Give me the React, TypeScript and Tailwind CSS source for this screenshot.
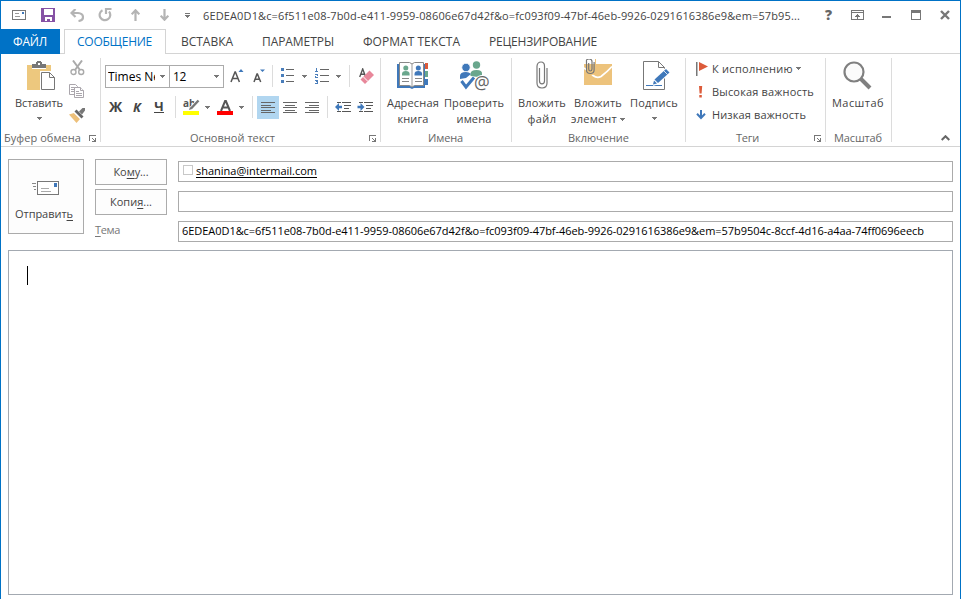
import { useLayoutEffect, useRef } from "react";
import type { ReactNode } from "react";

/** Single line of text whose tracking is adjusted so that it spans `w` pixels. */
function Fit({ w, className = "", children }: { w: number; className?: string; children: ReactNode }) {
  const ref = useRef<HTMLSpanElement>(null);
  useLayoutEffect(() => {
    const el = ref.current;
    if (!el) return;
    el.style.letterSpacing = "0px";
    const n = (el.textContent ?? "").length;
    const natural = el.getBoundingClientRect().width;
    el.style.letterSpacing = `${(w - natural) / n}px`;
  }, [w]);
  return (
    <span ref={ref} className={`inline-block whitespace-nowrap leading-4 ${className}`}>
      {children}
    </span>
  );
}

function Arrow({ className = "" }: { className?: string }) {
  return (
    <svg width="5" height="3" viewBox="0 0 5 3" shapeRendering="crispEdges" className={`shrink-0 ${className}`}>
      <path d="M0 0h5v1H0zM1 1h3v1H1zM2 2h1v1H2z" fill="#777" />
    </svg>
  );
}

function Launcher() {
  return (
    <svg width="8" height="8" viewBox="0 0 8 8" shapeRendering="crispEdges" className="shrink-0">
      <path d="M0 0h7v1H1v5H0zM3 3h1v1H3zM4 4h1v1H4zM6 3h1v4H3V6h2V5h1z" fill="#777" />
    </svg>
  );
}

function Divider({ className = "" }: { className?: string }) {
  return <div className={`h-[22px] w-px shrink-0 bg-[#dcdcdc] ${className}`} />;
}

function Group({ width, footer, children }: { width: string; footer: ReactNode; children: ReactNode }) {
  return (
    <div className={`relative flex shrink-0 flex-col ${width}`}>
      <div className="flex h-[76px]">{children}</div>
      <div className="flex h-4 text-[#666]">{footer}</div>
      <div className="absolute right-0 top-1 h-[84px] w-px bg-[#dcdcdc]" />
    </div>
  );
}

function BigButton({ width, icon, children }: { width: string; icon: ReactNode; children: ReactNode }) {
  return (
    <div className={`flex shrink-0 flex-col items-center ${width}`}>
      <div className="flex h-[41px] shrink-0 items-start pt-[7px]">{icon}</div>
      {children}
    </div>
  );
}

const PasteIcon = () => (
  <svg width="30" height="31" viewBox="0 0 30 31">
    <path d="M0 4h5v4h14V4h5v25H0z" fill="#edc87e" />
    <path d="M5 3h4V1h1V0h4v1h1v2h4v4H5z" fill="#777" />
    <rect x="11" y="2" width="2" height="2" fill="#fff" />
    <path d="M13 10h11l6 6v15H13z" fill="#fff" />
    <path d="M14.500 11.500h8l5 5v12h-13z" fill="#fff" stroke="#777" />
    <path d="M22.500 11.500v5h5" fill="none" stroke="#777" />
  </svg>
);

const CutIcon = () => (
  <svg width="15" height="16" viewBox="0 0 15 16" fill="none" stroke="#aaa">
    <path d="M3 0.500L10 10M12 0.500L5 10" strokeWidth="2" />
    <circle cx="3.500" cy="12" r="2.500" strokeWidth="1.400" />
    <circle cx="11.200" cy="12" r="2.500" strokeWidth="1.400" />
  </svg>
);

const CopyIcon = () => (
  <svg width="16" height="15" viewBox="0 0 16 15" fill="#fff" stroke="#aaa6ac">
    <path d="M.5.5h6l2 2v8h-8z" />
    <path d="M2 3.500h4M2 5.500h3M2 7.500h3" />
    <path d="M5.500 3.500h6l3 3v7h-9z" />
    <path d="M11.500 3.500v3h3M7 7.500h3M7 9.500h6M7 11.500h6" />
  </svg>
);

const BrushIcon = () => (
  <svg width="17" height="15" viewBox="0 0 17 15">
    <path d="M0 6.500l5-1.500 6 6-3.500 4z" fill="#edc07a" />
    <path d="M5.500 3.500l2-2 7 7-2 2z" fill="#666" />
    <path d="M10 3.500L13.500 0 16 0v2.500L13 6.500z" fill="#777" />
    <path d="M5 4.500l7 7" stroke="#fff" strokeWidth=".8" />
  </svg>
);

const BulletsIcon = () => (
  <svg width="14" height="15" viewBox="0 0 14 15" shapeRendering="crispEdges">
    <path d="M0 0h3v3H0zM0 6h3v3H0zM0 12h3v3H0z" fill="#4a7ebb" />
    <path d="M5 1h8v1H5zM5 7h8v1H5zM5 13h8v1H5z" fill="#666" />
  </svg>
);

const NumbersIcon = () => (
  <svg width="15" height="16" viewBox="0 0 15 16" shapeRendering="crispEdges">
    <path
      d="M1 0h1v3h1v1H0V3h1V1H0zM0 6h3v2H1v1h2v1H0V8h2V7H0zM0 12h3v4H0v-1h2v-1H1v-1h1H0z"
      fill="#4a7ebb"
    />
    <path d="M5 1h9v1H5zM5 7h9v1H5zM5 13h9v1H5z" fill="#666" />
  </svg>
);

const EraserIcon = () => (
  <svg width="15" height="16" viewBox="0 0 15 16">
    <path d="M.7 9L3.700 1l3 8M2 6.300h4" fill="none" stroke="#555" strokeWidth="1.400" />
    <path d="M1.500 11.500L10.500 2.500 15 7 6 16z" fill="#e8879a" />
    <path d="M4 8.500l5 5" stroke="#fff" strokeWidth="1" />
  </svg>
);

const HighlightIcon = () => (
  <svg width="17" height="17" viewBox="0 0 17 17" className="overflow-visible">
    <text x="0" y="8" fontSize="10" fontWeight="700" fill="#555" className="font-['Open_Sans',sans-serif]">
      ab
    </text>
    <path d="M15.500 1.500L7 10.500" stroke="#fff" strokeWidth="4" />
    <path d="M15.500 1.500L8 9.500" stroke="#777" strokeWidth="2.400" />
    <path d="M6 11l1-3 2 2z" fill="#777" />
    <rect x="0" y="12" width="16" height="4" fill="#ff0" />
  </svg>
);

const FontColorIcon = () => (
  <svg width="17" height="17" viewBox="0 0 17 17">
    <path d="M4 12L8.100 2h.8L13 12M5.500 8.500h6" fill="none" stroke="#555" strokeWidth="2" />
    <rect x="0" y="12" width="16" height="4" fill="#f00" />
  </svg>
);

function AlignIcon({ kind }: { kind: "left" | "center" | "right" }) {
  const off = { left: 0, center: 2, right: 4 }[kind];
  return (
    <svg width="14" height="11" viewBox="0 0 14 11" shapeRendering="crispEdges" fill="#666">
      {[0, 2.5, 5, 7.5, 10].map((y, i) => (
        <rect key={y} x={i % 2 ? off : 0} y={Math.round(y)} width={i % 2 ? 10 : 14} height="1" />
      ))}
    </svg>
  );
}

function DentIcon({ dir }: { dir: "in" | "out" }) {
  return (
    <svg width="16" height="11" viewBox="0 0 16 11">
      <path d="M2 0h4v1H2zM7 0h9v1H7zM9 3h7v1H9zM9 6h5v1H9zM2 9h4v1H2zM7 9h9v1H7z" fill="#555" />
      {dir === "out" ? (
        <path d="M0 5l4-4v2.800h3v2.400H4V9z" fill="#3f78ba" />
      ) : (
        <path d="M7.500 5l-4-4v2.800h-3v2.400h3V9z" fill="#3f78ba" />
      )}
    </svg>
  );
}

const BookIcon = () => (
  <svg width="32" height="29" viewBox="0 0 32 29">
    <path d="M28 2h3v6h-3z" fill="#dc5b3a" />
    <path d="M28 10h3v6h-3z" fill="#6aa78d" />
    <path d="M28 18h3v6h-3z" fill="#3f78ba" />
    <path d="M0 3h28v24H17l-2 1-2-1H0z" fill="#3f78ba" />
    <path d="M2.500 1.500h10l2.500 1.500 2.500-1.500h9v23h-9L15 26l-2.500-1.500h-10z" fill="#fff" stroke="#888" />
    <path d="M15 3v23" stroke="#999" />
    <circle cx="8.800" cy="7" r="2.500" fill="#6aa78d" />
    <path d="M5 14.500v-1.500q0-3 3.800-3t3.800 3v1.500z" fill="#6aa78d" />
    <circle cx="21.300" cy="7" r="2.500" fill="#3f78ba" />
    <path d="M17.500 14.500v-1.500q0-3 3.800-3t3.800 3v1.500z" fill="#3f78ba" />
    <path d="M5 17.500h7M5 20.500h7M18 17.500h7M18 20.500h7" stroke="#888" />
  </svg>
);

const CheckNamesIcon = () => (
  <svg width="31" height="31" viewBox="0 0 31 31">
    <circle cx="16.500" cy="4" r="3.700" fill="#6aa78d" />
    <path d="M10.500 15v-2q0-4 6-4t5.500 4v2l-4 1z" fill="#6aa78d" />
    <circle cx="6" cy="6.500" r="4.200" fill="#3f78ba" stroke="#fff" strokeWidth=".8" />
    <path d="M0 18v-3q0-4 6-4 3 0 5 2l-5 4z" fill="#3f78ba" />
    <path d="M1.500 20l4.500 6L14 16.500" fill="none" stroke="#fff" strokeWidth="5" />
    <path d="M1.500 20l4.500 6L14 16.500" fill="none" stroke="#3f78ba" strokeWidth="3" />
    <text x="14" y="27.500" fontSize="17.500" fill="#666" stroke="#fff" strokeWidth="2" paintOrder="stroke" className="font-['Open_Sans',sans-serif]">
      @
    </text>
  </svg>
);

const ClipIcon = () => (
  <svg width="12" height="29" viewBox="0 0 12 29" fill="none" stroke="#777" strokeWidth="1.200">
    <path d="M3.500 7v13q0 2.800 2.500 2.800T8.500 20V5q0-4-3.500-4T1 5v17q0 5 5 5t5-5V7" />
  </svg>
);

const AttachItemIcon = () => (
  <svg width="29" height="29" viewBox="0 0 29 29">
    <rect x="0" y="5" width="28" height="21" fill="#edc37c" />
    <path d="M0 9q6 4 9 7.500 4 3 8 1Q23 13 28 7.500" fill="none" stroke="#fff" strokeWidth="1.800" />
    <path d="M2 0h10v12q-1 4-5 4t-5-4z" fill="#edc37c" />
    <path d="M2 0h9v5H2z" fill="#fff" />
    <path d="M4.700 4v6q0 2 1.600 2T8 10V2.500Q8 0 5 0T2.500 2.500V11q0 3.500 3.800 3.500t3.800-3.500V3" fill="none" stroke="#777" strokeWidth="1.200" />
  </svg>
);

const SignatureIcon = () => (
  <svg width="28" height="30" viewBox="0 0 28 30">
    <path d="M1.500.5h15l6 6v22h-21z" fill="#fff" stroke="#777" />
    <path d="M16.500.5v6h6" fill="none" stroke="#777" />
    <path d="M4 24.500h16" stroke="#3f78ba" />
    <path d="M24 6l5 5-12 12-6 2 2-7z" fill="#fff" />
    <path d="M24 8l3.500 3.500L16 22l-3.500-3.500z" fill="#3f78ba" />
    <path d="M12 19.500l3 3-4 1z" fill="#3f78ba" />
    <path d="M21.500 9.500l4 4" stroke="#fff" strokeWidth=".8" />
  </svg>
);

const ZoomIcon = () => (
  <svg width="30" height="30" viewBox="0 0 30 30" fill="none" stroke="#808080">
    <circle cx="11" cy="11" r="9.500" strokeWidth="2.200" fill="#fbfbfb" />
    <path d="M17.500 17.500L27 27" strokeWidth="4" />
  </svg>
);

function TitleBar() {
  return (
    <div className="flex h-7 items-start text-[#444]">
      <svg width="14" height="11" viewBox="0 0 14 11" className="ml-[11px] mt-[9px]" shapeRendering="crispEdges">
        <path d="M.5.5h13v9H.5z" fill="#fff" stroke="#777" />
        <path d="M3 3h4v1H3zM3 6h5v1H3z" fill="#999" />
        <path d="M10 2h2v2h-2z" fill="#3f78ba" />
      </svg>
      <svg width="14" height="14" viewBox="0 0 14 14" className="ml-[15px] mt-[7px]">
        <path d="M0 0h14v14H0z" fill="#8652a5" />
        <path d="M3 1h9v6H3zM4 9h7v4H9v-2H6v2H4z" fill="#fff" />
      </svg>
      <svg width="14" height="13" viewBox="0 0 14 13" className="ml-[15px] mt-[8px]" fill="none" stroke="#b4b4b4" strokeWidth="2.200">
        <path d="M5.500 0L1.500 4l4 4M2 4h6q5 .5 5 4t-4.500 4" />
      </svg>
      <svg width="14" height="14" viewBox="0 0 14 14" className="ml-[14px] mt-[7px]" fill="none" stroke="#b4b4b4" strokeWidth="2.200">
        <path d="M4.500 2.200A5.300 5.300 0 1 0 11 3.500M8 6V1h5.500" />
      </svg>
      <svg width="9" height="12" viewBox="0 0 9 12" className="ml-[19px] mt-2" fill="none" stroke="#b4b4b4" strokeWidth="2.200">
        <path d="M4.500 12V1.500M.7 5.300l3.800-4 3.800 4" />
      </svg>
      <svg width="9" height="12" viewBox="0 0 9 12" className="ml-5 mt-2" fill="none" stroke="#b4b4b4" strokeWidth="2.200">
        <path d="M4.500 0v10.500M.7 6.700l3.800 4 3.800-4" />
      </svg>
      <svg width="6" height="6" viewBox="0 0 6 6" className="ml-[16px] mt-3" shapeRendering="crispEdges">
        <path d="M0 0h5v1H0zM0 2h5v1H0zM1 3h3v1H1zM2 4h1v1H2z" fill="#777" />
      </svg>
      <div className="ml-[12px] mt-[7px] w-[618px] text-[11px]">
        <Fit w={597}>6EDEA0D1&amp;c=6f511e08-7b0d-e411-9959-08606e67d42f&amp;o=fc093f09-47bf-46eb-9926-0291616386e9&amp;em=57b95...</Fit>
      </div>
      <span className="ml-[4px] mt-[5px] w-[9px] text-[14px] font-extrabold leading-[18px] text-[#666]">?</span>
      <svg width="13" height="11" viewBox="0 0 13 11" className="ml-[17px] mt-[9px]" shapeRendering="crispEdges">
        <path d="M.5.5h12v9H.5z" fill="none" stroke="#777" />
        <path d="M1 2h11v1H1zM6 4h1v5H6zM5 5h3v1H5zM4 6h5v1H4z" fill="#777" />
      </svg>
      <div className="ml-[18px] mt-[15px] h-0.5 w-[9px] bg-[#777]" />
      <div className="ml-5 mt-[9px] h-[10px] w-[10px] border border-t-[3px] border-[#777]" />
      <svg width="10" height="10" viewBox="0 0 10 10" className="ml-[19px] mt-[9px]">
        <path d="M1 1l8 8M9 1L1 9" stroke="#777" strokeWidth="2.400" />
      </svg>
    </div>
  );
}

function Tabs() {
  const rest: [string, number, string][] = [
    ["ВСТАВКА", 52, "w-[81px]"],
    ["ПАРАМЕТРЫ", 72, "w-[101px]"],
    ["ФОРМАТ ТЕКСТА", 97, "w-[126px]"],
    ["РЕЦЕНЗИРОВАНИЕ", 108, "w-[140px]"],
  ];
  return (
    <div className="flex h-[25px] text-xs text-[#444]">
      <div className="h-full w-[59px] bg-[#0072c6] pl-3 pt-[5px] text-white">
        <Fit w={34}>ФАЙЛ</Fit>
      </div>
      <div className="w-1 border-b border-[#d4d4d4]" />
      <div className="w-[102px] border border-b-0 border-[#d4d4d4] pl-3 pt-1 text-[#0072c6]">
        <Fit w={75}>СООБЩЕНИЕ</Fit>
      </div>
      <div className="flex flex-1 border-b border-[#d4d4d4] pl-[15px] pt-[5px]">
        {rest.map(([label, w, cell]) => (
          <div key={label} className={cell}>
            <Fit w={w}>{label}</Fit>
          </div>
        ))}
      </div>
    </div>
  );
}

function FontGroup() {
  return (
    <Group
      width="w-[280px]"
      footer={
        <>
          <div className="ml-[89px] w-[179px]">
            <Fit w={85}>Основной текст</Fit>
          </div>
          <div className="mt-[5px]">
            <Launcher />
          </div>
        </>
      }
    >
      <div className="flex w-full flex-col pl-1 pt-[11px]">
        <div className="flex h-[23px] shrink-0">
          <div className="flex w-[65px] items-center justify-between border border-[#ababab] pl-0.5 pr-1 text-xs text-black">
            <div className="w-[47px] overflow-hidden">
              <Fit w={52}>Times Ne</Fit>
            </div>
            <Arrow />
          </div>
          <div className="-ml-px flex w-[55px] items-center justify-between border border-[#ababab] pl-[3px] pr-1 text-xs text-black">
            <Fit w={13}>12</Fit>
            <Arrow />
          </div>
          <svg width="14" height="16" viewBox="0 0 14 16" className="ml-1.5 mt-[3px]">
            <path d="M1 14L5 4h.4l4 10M2.500 10.500h6" fill="none" stroke="#555" strokeWidth="1.500" />
            <path d="M8.500 4L11 1l2.500 3z" fill="#3f78ba" />
          </svg>
          <svg width="14" height="16" viewBox="0 0 14 16" className="ml-[9px] mt-[3px]">
            <path d="M1 14l3-8h.4l3.300 8M2.200 11.200h4.500" fill="none" stroke="#555" strokeWidth="1.500" />
            <path d="M7 1.500h5L9.500 4z" fill="#3f78ba" />
          </svg>
          <Divider className="ml-[5px]" />
          <div className="ml-2 mt-[3px] w-[14px]">
            <BulletsIcon />
          </div>
          <Arrow className="ml-[7px] mt-[10px]" />
          <div className="ml-2 mt-[3px] w-[15px]">
            <NumbersIcon />
          </div>
          <Arrow className="ml-1.5 mt-[10px]" />
          <Divider className="ml-2" />
          <div className="ml-[9px] mt-[3px]">
            <EraserIcon />
          </div>
        </div>
        <div className="mt-2 flex h-[23px] shrink-0 text-[13px] font-bold text-[#444]">
          <div className="ml-1 mt-0.5 w-[24px]">
            <Fit w={14} className="text-[14px]">Ж</Fit>
          </div>
          <div className="mt-0.5 w-[21px] italic">
            <Fit w={9}>К</Fit>
          </div>
          <div className="mt-0.5 h-[15px] w-[10px] border-b border-[#444] text-center leading-4">Ч</div>
          <Divider className="ml-[11px]" />
          <div className="ml-[7px] mt-[3px]">
            <HighlightIcon />
          </div>
          <Arrow className="ml-[5px] mt-[10px]" />
          <div className="ml-[7px] mt-[3px]">
            <FontColorIcon />
          </div>
          <Arrow className="ml-[5px] mt-[10px]" />
          <Divider className="ml-2" />
          <div className="ml-1 flex h-[23px] w-[22px] justify-center bg-[#b1d6f0] pt-[6px]">
            <AlignIcon kind="left" />
          </div>
          <div className="flex w-[22px] justify-center pt-[6px]">
            <AlignIcon kind="center" />
          </div>
          <div className="flex w-[22px] justify-center pt-[6px]">
            <AlignIcon kind="right" />
          </div>
          <Divider className="ml-1" />
          <div className="ml-[7px] mt-[6px]">
            <DentIcon dir="out" />
          </div>
          <div className="ml-1.5 mt-[6px]">
            <DentIcon dir="in" />
          </div>
        </div>
      </div>
    </Group>
  );
}

function Ribbon() {
  return (
    <div className="flex h-[93px] border-b border-[#d4d4d4] text-[11px] text-[#444]">
      <Group
        width="w-[100px]"
        footer={
          <>
            <div className="ml-[3px] w-[85px]">
              <Fit w={77}>Буфер обмена</Fit>
            </div>
            <div className="mt-[5px]">
              <Launcher />
            </div>
          </>
        }
      >
        <div className="w-[10px]" />
        <BigButton
          width="w-[56px]"
          icon={
            <div className="ml-1.5">
              <PasteIcon />
            </div>
          }
        >
          <Fit w={48}>Вставить</Fit>
          <Arrow className="mt-[6px]" />
        </BigButton>
        <div className="flex flex-col gap-[9px] pl-0.5 pt-1.5">
          <div className="flex h-[15px] pl-px">
            <CutIcon />
          </div>
          <CopyIcon />
          <BrushIcon />
        </div>
      </Group>

      <FontGroup />

      <Group
        width="w-[131px]"
        footer={
          <div className="ml-[47px]">
            <Fit w={35}>Имена</Fit>
          </div>
        }
      >
        <div className="w-[3px]" />
        <BigButton width="w-[58px]" icon={<BookIcon />}>
          <Fit w={52}>Адресная</Fit>
          <Fit w={31}>книга</Fit>
        </BigButton>
        <BigButton
          width="w-[64px]"
          icon={
            <div className="ml-[3px]">
              <CheckNamesIcon />
            </div>
          }
        >
          <Fit w={60}>Проверить</Fit>
          <Fit w={35}>имена</Fit>
        </BigButton>
      </Group>

      <Group
        width="w-[174px]"
        footer={
          <div className="ml-[56px]">
            <Fit w={61}>Включение</Fit>
          </div>
        }
      >
        <div className="w-0.5" />
        <BigButton width="w-[56px]" icon={<ClipIcon />}>
          <Fit w={48}>Вложить</Fit>
          <Fit w={29}>файл</Fit>
        </BigButton>
        <BigButton
          width="w-[56px]"
          icon={
            <div className="-mt-0.5">
              <AttachItemIcon />
            </div>
          }
        >
          <Fit w={48}>Вложить</Fit>
          <div className="flex items-center gap-[3px]">
            <Fit w={46}>элемент</Fit>
            <Arrow />
          </div>
        </BigButton>
        <BigButton
          width="w-[56px]"
          icon={
            <div className="ml-1">
              <SignatureIcon />
            </div>
          }
        >
          <Fit w={48}>Подпись</Fit>
          <Arrow className="mt-[6px]" />
        </BigButton>
      </Group>

      <Group
        width="w-[140px]"
        footer={
          <>
            <div className="ml-[50px] w-[78px]">
              <Fit w={23}>Теги</Fit>
            </div>
            <div className="mt-[5px]">
              <Launcher />
            </div>
          </>
        }
      >
        <div className="flex flex-col pl-[10px] pt-[3px]">
          <div className="flex h-[23px] items-center">
            <svg width="16" height="15" viewBox="0 0 16 15" className="shrink-0">
              <path d="M0 1h1.500v14H0z" fill="#777" />
              <path d="M3 1l9 4.500L3 10z" fill="#dc5b3a" />
            </svg>
            <Fit w={81}>К исполнению</Fit>
            <Arrow className="ml-[3px]" />
          </div>
          <div className="flex h-[23px] items-center">
            <svg width="16" height="14" viewBox="0 0 16 14" className="shrink-0">
              <path d="M3 1h3.200l-.6 7.500H3.600zM3.300 10h2.500v2.500H3.300z" fill="#dc5b3a" />
            </svg>
            <Fit w={102}>Высокая важность</Fit>
          </div>
          <div className="flex h-[23px] items-center">
            <svg width="16" height="14" viewBox="0 0 16 14" className="shrink-0" fill="none" stroke="#3f78ba" strokeWidth="2">
              <path d="M5 2v8M1 5.800l4 4.200 4-4.200" />
            </svg>
            <Fit w={94}>Низкая важность</Fit>
          </div>
        </div>
      </Group>

      <Group
        width="w-[66px]"
        footer={
          <div className="ml-2">
            <Fit w={48}>Масштаб</Fit>
          </div>
        }
      >
        <div className="w-px" />
        <BigButton width="w-[62px]" icon={<ZoomIcon />}>
          <Fit w={52}>Масштаб</Fit>
        </BigButton>
      </Group>

      <div className="flex flex-1 items-end justify-end pb-[5px] pr-[10px]">
        <svg width="9" height="6" viewBox="0 0 9 6" fill="none" stroke="#666" strokeWidth="2">
          <path d="M.7 5l3.800-3.800L8.300 5" />
        </svg>
      </div>
    </div>
  );
}

function Envelope() {
  return (
    <div className="flex h-[91px] pl-[7px] pt-3 text-[11px] text-[#444]">
      <div className="flex h-[75px] w-[76px] flex-col border border-[#ababab] bg-[#fdfdfd] pl-1.5 pt-[21px]">
        <svg width="28" height="15" viewBox="0 0 28 15" shapeRendering="crispEdges" className="ml-[17px]">
          <path d="M5.500.5h21v13h-21z" fill="#fff" stroke="#777" />
          <path d="M0 2h4v1H0zM1 5h3v1H1zM2 8h2v1H2z" fill="#888" />
          <path d="M9 7h8v1H9zM9 10h10v1H9z" fill="#aaa" />
          <path d="M22 2h3v4h-3z" fill="#3f78ba" />
        </svg>
        <div className="mt-[10px]">
          <Fit w={58}>
            Отправит<span className="underline underline-offset-2">ь</span>
          </Fit>
        </div>
      </div>

      <div className="ml-[11px] flex w-[72px] flex-col">
        <div className="mb-1 flex h-[26px] justify-center border border-[#ababab] bg-[#fdfdfd] pt-1">
          <Fit w={35}>
            Ко<span className="underline underline-offset-2">м</span>у...
          </Fit>
        </div>
        <div className="flex h-[26px] justify-center border border-[#ababab] bg-[#fdfdfd] pt-1">
          <Fit w={42}>
            Копи<span className="underline underline-offset-2">я</span>...
          </Fit>
        </div>
        <div className="mt-[7px] text-[#777]">
          <Fit w={25}>
            <span className="underline underline-offset-2">Т</span>ема
          </Fit>
        </div>
      </div>

      <div className="ml-[11px] mt-0.5 flex w-[775px] flex-col gap-[9px] text-black">
        <div className="flex h-[21px] shrink-0 items-start border border-[#ababab] pl-1">
          <div className="mt-[3px] h-[10px] w-[10px] border border-[#c8c8c8]" />
          <Fit w={121} className="ml-[3px] mt-px underline underline-offset-2">
            shanina@intermail.com
          </Fit>
        </div>
        <div className="h-[21px] shrink-0 border border-[#ababab]" />
        <div className="flex h-[21px] shrink-0 items-start border border-[#ababab] pl-[3px]">
          <Fit w={742} className="mt-px">
            6EDEA0D1&amp;c=6f511e08-7b0d-e411-9959-08606e67d42f&amp;o=fc093f09-47bf-46eb-9926-0291616386e9&amp;em=57b9504c-8ccf-4d16-a4aa-74ff0696eecb
          </Fit>
        </div>
      </div>
    </div>
  );
}

export default function App() {
  return (
    <div className="flex h-[599px] w-[961px] flex-col overflow-hidden border border-b-0 border-[#0072c6] bg-white font-['Open_Sans','Noto_Sans',sans-serif]">
      <TitleBar />
      <Tabs />
      <Ribbon />
      <Envelope />
      <div className="ml-[7px] mt-3 h-[345px] w-[945px] border border-[#a3a9b1] pl-[18px] pt-[15px]">
        <div className="h-[19px] w-px bg-black" />
      </div>
    </div>
  );
}
